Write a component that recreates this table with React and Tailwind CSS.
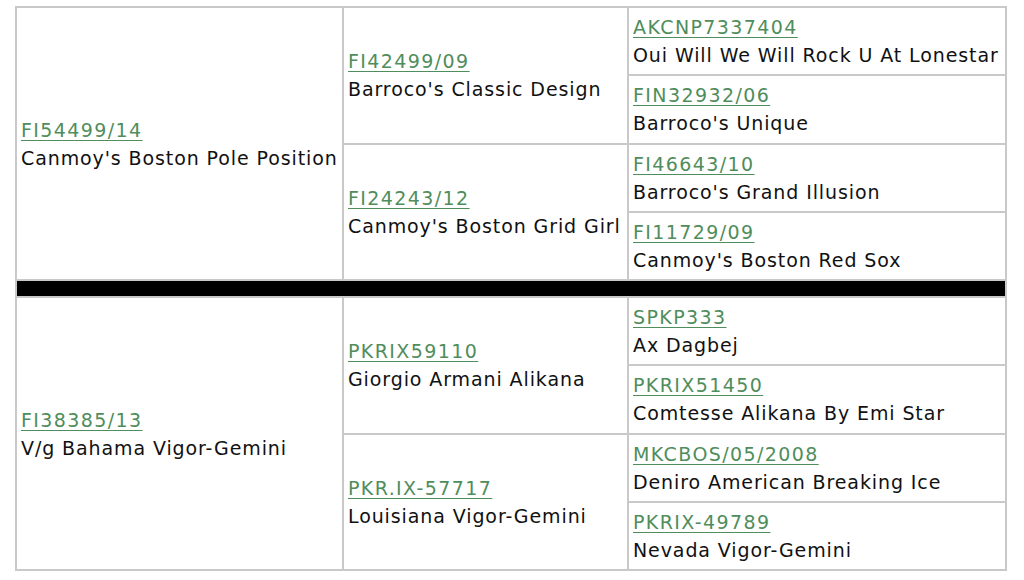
import React from "react";

const top = {
  sire: { code: "FI54499/14", name: "Canmoy's Boston Pole Position" },
  parents: [
    {
      code: "FI42499/09",
      name: "Barroco's Classic Design",
      grand: [
        { code: "AKCNP7337404", name: "Oui Will We Will Rock U At Lonestar" },
        { code: "FIN32932/06", name: "Barroco's Unique" },
      ],
    },
    {
      code: "FI24243/12",
      name: "Canmoy's Boston Grid Girl",
      grand: [
        { code: "FI46643/10", name: "Barroco's Grand Illusion" },
        { code: "FI11729/09", name: "Canmoy's Boston Red Sox" },
      ],
    },
  ],
};

const bottom = {
  sire: { code: "FI38385/13", name: "V/g Bahama Vigor-Gemini" },
  parents: [
    {
      code: "PKRIX59110",
      name: "Giorgio Armani Alikana",
      grand: [
        { code: "SPKP333", name: "Ax Dagbej" },
        { code: "PKRIX51450", name: "Comtesse Alikana By Emi Star" },
      ],
    },
    {
      code: "PKR.IX-57717",
      name: "Louisiana Vigor-Gemini",
      grand: [
        { code: "MKCBOS/05/2008", name: "Deniro American Breaking Ice" },
        { code: "PKRIX-49789", name: "Nevada Vigor-Gemini" },
      ],
    },
  ],
};

const Dog = ({ dog, className = "" }) => (
  <div className={`bg-white flex flex-col justify-center px-[4px] ${className}`}>
    <a href="#" className="self-start text-[#4f8d5c] underline underline-offset-[3px] decoration-1 whitespace-nowrap tracking-[1.4px]">
      {dog.code}
    </a>
    <span className="text-[#111] whitespace-nowrap tracking-[0.9px]">{dog.name}</span>
  </div>
);

const Section = ({ data }) => (
  <>
    <Dog dog={data.sire} className="row-span-4" />
    {data.parents.map((p) => (
      <React.Fragment key={p.code}>
        <Dog dog={p} className="row-span-2" />
        <Dog dog={p.grand[0]} />
        {/* second grandparent goes on the next row, col 3 */}
        <Dog dog={p.grand[1]} className="col-start-3" />
      </React.Fragment>
    ))}
  </>
);

export default function App() {
  return (
    <div className="w-[1024px] h-[580px] bg-white pt-[6px] pl-[15px] font-['DejaVu_Sans',sans-serif] text-[19px] leading-[28px]">
      <div className="w-[992px] h-[565px] bg-[#c9c9c9] p-[2px] grid grid-cols-[325px_283px_376px] grid-rows-[repeat(4,minmax(0,1fr))_15px_repeat(4,minmax(0,1fr))] gap-[2px]">
        <Section data={top} />
        <div className="col-span-3 bg-black" />
        <Section data={bottom} />
      </div>
    </div>
  );
}
